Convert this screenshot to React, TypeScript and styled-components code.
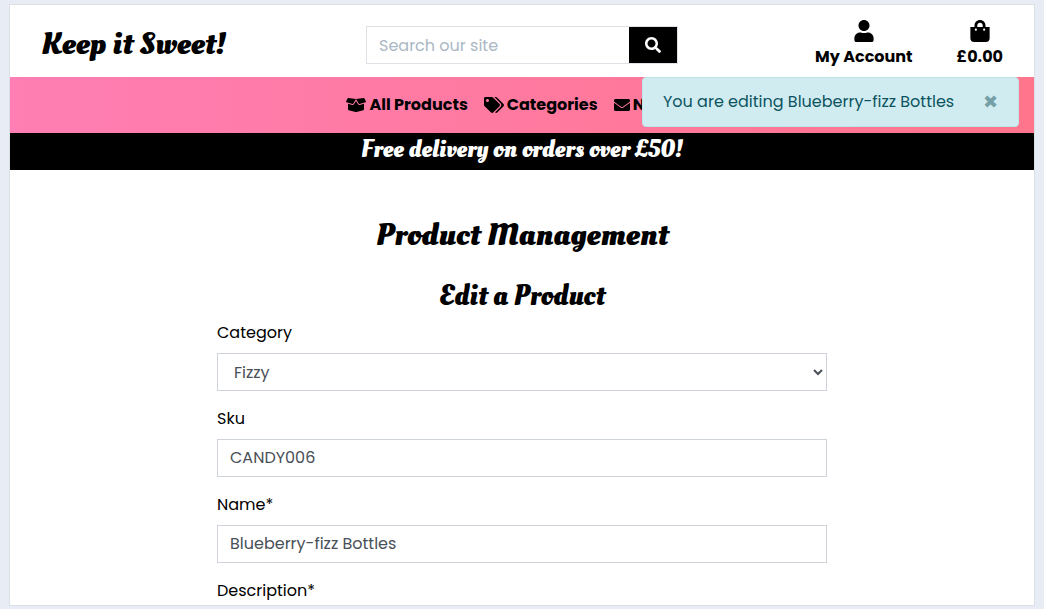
import React from 'react';
import styled, { createGlobalStyle } from 'styled-components';
import { FaBoxOpen, FaEnvelope, FaSearch, FaShoppingBag, FaTags, FaUser } from 'react-icons/fa';

const GlobalStyle = createGlobalStyle`
  *, *::before, *::after { box-sizing: border-box; }
  body {
    margin: 0;
    background: #e8edf5;
    color: #000;
    font: 400 16px/24px Poppins, Inter, sans-serif;
  }
  input, select, button { font: inherit; border-radius: 0; }
  a { color: inherit; text-decoration: none; }
`;

const script = `'Oleo Script', 'Liberation Serif', serif`;

const Page = styled.div`
  margin: 4px 9px;
  padding-bottom: 2px;
  background: #fff;
  border: 1px solid #dbdfe6;
`;

const Header = styled.header`
  display: grid;
  grid-template-columns: 1fr 312px 1fr;
  align-items: center;
  height: 72px;
  padding: 8px 31px 0;
`;

const Logo = styled.a`
  padding-bottom: 2px;
  font: 700 32px/36px ${script};
`;

const SearchForm = styled.form`
  display: flex;
  height: 38px;
  border: 1px solid #dee2e6;
`;

const SearchInput = styled.input`
  flex: 1;
  min-width: 0;
  padding: 2px 12px 0;
  border: 0;
  color: #495057;
  &::placeholder { color: #aab7c4; opacity: 1; }
`;

const SearchButton = styled.button`
  display: flex;
  align-items: center;
  justify-content: center;
  width: 48px;
  padding: 0;
  border: 0;
  background: #000;
  color: #fff;
`;

const Tools = styled.nav`
  display: flex;
  justify-content: flex-end;
  gap: 44px;
`;

const Tool = styled.a`
  display: flex;
  flex-direction: column;
  align-items: center;
  gap: 3px;
  padding-bottom: 2px;
  font-weight: 700;
  white-space: nowrap;
  svg { display: block; width: 22px; height: 22px; }
`;

const NavWrap = styled.div`
  position: relative;
`;

const NavBar = styled.nav`
  display: flex;
  align-items: center;
  justify-content: center;
  gap: 16px;
  height: 56px;
  padding-left: 24px;
  background: linear-gradient(to right, #ff7eb3, #ff758c);
`;

const NavLink = styled.a<{ $icon: number }>`
  display: flex;
  align-items: center;
  gap: 3px;
  font-weight: 700;
  white-space: nowrap;
  svg { width: ${(p) => p.$icon}px; height: 16px; }
`;

const Toast = styled.div`
  position: absolute;
  top: 0;
  right: 15px;
  display: flex;
  align-items: center;
  justify-content: space-between;
  width: 377px;
  height: 50px;
  padding: 0 20px;
  border: 1px solid #bee5eb;
  border-radius: 4px;
  background: #d1ecf1;
  color: #0c5460;
  white-space: nowrap;
`;

const Close = styled.button`
  padding: 0;
  border: 0;
  background: none;
  color: #75a0a7;
  font: 400 18px/24px 'DejaVu Sans', sans-serif;
`;

const Banner = styled.p`
  margin: 0;
  padding-bottom: 3px;
  background: #000;
  color: #fff;
  font: 700 24px/34px ${script};
  text-align: center;
`;

const Main = styled.main`
  padding: 47px 15px 0;
`;

const Title = styled.h1`
  margin: 0 0 26px;
  font: 700 32px/36px ${script};
  text-align: center;
`;

const Subtitle = styled.h2`
  margin: 0 0 6px;
  font: 700 28px/36px ${script};
  text-align: center;
`;

const Form = styled.form`
  width: 100%;
  max-width: 610px;
  margin: 0 auto;
`;

const Field = styled.div`
  display: flex;
  flex-direction: column;
  gap: 8px;
  & + & { margin-top: 16px; }
`;

const Input = styled.input`
  width: 100%;
  height: 38px;
  padding: 0 12px 2px;
  border: 1px solid #ced4da;
  background: #fff;
  color: #495057;
`;

const Select = styled(Input).attrs({ as: 'select' })`
  padding: 0 12px;
`;

export default function App() {
  return (
    <>
      <GlobalStyle />
      <Page>
        <Header>
          <Logo href="#">Keep it Sweet!</Logo>
          <SearchForm role="search">
            <SearchInput type="text" aria-label="Search our site" placeholder="Search our site" />
            <SearchButton type="button" aria-label="Search"><FaSearch /></SearchButton>
          </SearchForm>
          <Tools>
            <Tool href="#"><FaUser />My Account</Tool>
            <Tool href="#"><FaShoppingBag />£0.00</Tool>
          </Tools>
        </Header>
        <NavWrap>
          <NavBar>
            <NavLink href="#" $icon={20}><FaBoxOpen />All Products</NavLink>
            <NavLink href="#" $icon={20}><FaTags />Categories</NavLink>
            <NavLink href="#" $icon={16}><FaEnvelope />Newsletter</NavLink>
          </NavBar>
          <Toast role="status">
            You are editing Blueberry-fizz Bottles
            <Close type="button" aria-label="Close">✖</Close>
          </Toast>
        </NavWrap>
        <Banner>Free delivery on orders over £50!</Banner>
        <Main>
          <Title>Product Management</Title>
          <Subtitle>Edit a Product</Subtitle>
          <Form>
            <Field>
              <label htmlFor="category">Category</label>
              <Select id="category"><option>Fizzy</option></Select>
            </Field>
            <Field>
              <label htmlFor="sku">Sku</label>
              <Input id="sku" type="text" defaultValue="CANDY006" />
            </Field>
            <Field>
              <label htmlFor="name">Name*</label>
              <Input id="name" type="text" defaultValue="Blueberry-fizz Bottles" />
            </Field>
            <Field>
              <span>Description*</span>
            </Field>
          </Form>
        </Main>
      </Page>
    </>
  );
}
